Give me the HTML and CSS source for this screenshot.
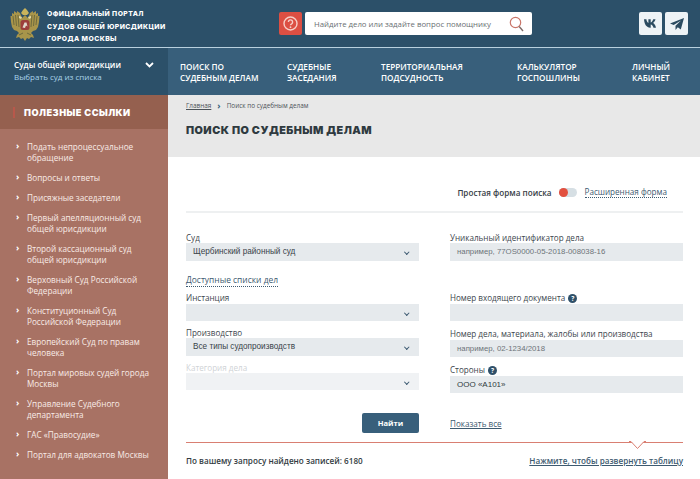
FILE: index.html
```html
<!DOCTYPE html>
<html lang="ru">
<head>
<meta charset="utf-8">
<title>Поиск по судебным делам</title>
<link rel="stylesheet" href="styles.css">
</head>
<body>
<div class="page">
  <header class="top">
    <div class="brand">
      <svg class="emblem" width="30" height="34" viewBox="0 0 30 34">
        <path fill="#a8954a" d="M15 7 12 10 10 5 7 3 7 5 4 3 4 6 2 5 2 8 .5 8 1 14 2 19 4 22 7 23 9 25 7 27 6 30 9 29 11 31 13 30 15 33 17 30 19 31 21 29 24 30 23 27 21 25 23 23 26 22 28 19 29 14 29.5 8 28 8 28 5 26 6 26 3 23 5 23 3 20 5 18 10Z"/>
        <path fill="none" stroke="#5f5f3a" stroke-width=".8" d="M3 8 4 17M5.500 7 6.500 18M8 7 9 19M27 8 26 17M24.500 7 23.500 18M22 7 21 19M9 27l4-2M21 27l-4-2"/>
        <path fill="#c9b45c" d="M11 5 13 2 15 0 17 2 19 5 17 7 13 7Z"/>
        <path fill="#e3d9a8" d="M9 8 12 9 11 11 9 10ZM21 8 18 9 19 11 21 10Z"/>
        <rect fill="#9c3f3b" x="10.500" y="12" width="9" height="10" rx="2.500"/>
        <path fill="#e0d9cc" d="M12.500 19.500 14.500 14.500 16.500 14.500 17.500 18.500 16 17.500 15 20Z"/>
      </svg>
      <div class="brand-name">ОФИЦИАЛЬНЫЙ ПОРТАЛ<br>СУДОВ ОБЩЕЙ ЮРИСДИКЦИИ<br>ГОРОДА МОСКВЫ</div>
    </div>
    <div class="assist">
      <span class="help-btn">
        <svg width="15" height="15" viewBox="0 0 15 15"><circle cx="7.5" cy="7.5" r="6.5" fill="none" stroke="#f6cfc8" stroke-width="1.4"/><path d="M5.4 6a2.1 2.1 0 1 1 3.2 1.8c-.7.4-1.1.8-1.1 1.5" fill="none" stroke="#f6cfc8" stroke-width="1.4"/><circle cx="7.5" cy="11.2" r=".9" fill="#f6cfc8"/></svg>
      </span>
      <div class="search">
        <span>Найдите дело или задайте вопрос помощнику</span>
        <svg width="15" height="16" viewBox="0 0 15 16"><circle cx="6.5" cy="6.5" r="5.2" fill="none" stroke="#c9766a" stroke-width="1.2"/><path d="M10.2 10.5 14 15" stroke="#7d6a68" stroke-width="1.4"/></svg>
      </div>
    </div>
    <div class="social">
      <span class="social-btn">
        <svg width="14" height="9" viewBox="0 0 14 9"><path fill="#2b4b60" d="M0 .3h2.4c.2 2 1.200 3.500 2 3.800V.3h2.300v3.200C7.500 3.400 8.700 2 9.200.3h2.300c-.4 1.800-1.500 3.100-2.400 3.700 1 .5 2.300 1.700 2.900 4.700H9.500C9 6.900 8 5.700 6.700 5.500v3.200h-.6C2.700 8.700.3 5.500 0 .3Z"/></svg>
      </span>
      <span class="social-btn">
        <svg width="14" height="12" viewBox="0 0 14 12"><path fill="#2b4b60" d="M14 0 0 5.400l3.700 1.500L11 2.500 5.500 7.800V12l2.300-2.800 3 2.200Z"/></svg>
      </span>
    </div>
  </header>

  <nav class="nav">
    <div class="court-pick">
      <div>
        <div class="court-title">Суды общей юрисдикции</div>
        <div class="court-sub">Выбрать суд из списка</div>
      </div>
      <svg class="court-chev" width="9" height="6" viewBox="0 0 9 6"><path d="M1 1l3.500 3.500L8 1" fill="none" stroke="#fff" stroke-width="1.800"/></svg>
    </div>
    <div class="nav-links">
      <a>ПОИСК ПО<br>СУДЕБНЫМ ДЕЛАМ</a>
      <a>СУДЕБНЫЕ<br>ЗАСЕДАНИЯ</a>
      <a>ТЕРРИТОРИАЛЬНАЯ<br>ПОДСУДНОСТЬ</a>
      <a>КАЛЬКУЛЯТОР<br>ГОСПОШЛИНЫ</a>
      <a>ЛИЧНЫЙ<br>КАБИНЕТ</a>
    </div>
  </nav>

  <div class="body">
    <aside class="side">
      <div class="side-head"><i class="side-mark"></i><span>ПОЛЕЗНЫЕ ССЫЛКИ</span></div>
      <ul class="side-list">
        <li>Подать непроцессуальное обращение</li>
        <li>Вопросы и ответы</li>
        <li>Присяжные заседатели</li>
        <li>Первый апелляционный суд общей юрисдикции</li>
        <li>Второй кассационный суд общей юрисдикции</li>
        <li>Верховный Суд Российской Федерации</li>
        <li>Конституционный Суд Российской Федерации</li>
        <li>Европейский Суд по правам человека</li>
        <li>Портал мировых судей города Москвы</li>
        <li>Управление Судебного департамента</li>
        <li>ГАС «Правосудие»</li>
        <li>Портал для адвокатов Москвы</li>
      </ul>
    </aside>

    <main class="main">
      <div class="band">
        <div class="crumbs"><a>Главная</a><b>›</b><span>Поиск по судебным делам</span></div>
        <h1>ПОИСК ПО СУДЕБНЫМ ДЕЛАМ</h1>
      </div>
      <div class="content">
        <div class="mode">
          <strong>Простая форма поиска</strong>
          <span class="toggle"><i></i></span>
          <a class="dotted">Расширенная форма</a>
        </div>
        <div class="form">
          <div class="col">
            <label>Суд</label>
            <div class="ctl select">Щербинский районный суд</div>
            <a class="dotted lists">Доступные списки дел</a>
            <label class="l-inst">Инстанция</label>
            <div class="ctl select"></div>
            <label class="l-next">Производство</label>
            <div class="ctl select">Все типы судопроизводств</div>
            <label class="l-next muted">Категория дела</label>
            <div class="ctl select faded"></div>
            <button class="go" type="button">Найти</button>
          </div>
          <div class="col">
            <label>Уникальный идентификатор дела</label>
            <div class="ctl ph">например, 77OS0000-05-2018-008038-16</div>
            <label class="l-doc">Номер входящего документа <i class="q">?</i></label>
            <div class="ctl"></div>
            <label class="l-case">Номер дела, материала, жалобы или производства</label>
            <div class="ctl ph">например, 02-1234/2018</div>
            <label class="l-case">Стороны <i class="q">?</i></label>
            <div class="ctl val">ООО «А101»</div>
            <a class="show-all">Показать все</a>
          </div>
        </div>
        <div class="rule">
          <svg class="notch" width="17" height="9" viewBox="0 0 17 9"><path d="M0 .5h2l6.500 7 6.500-7h2" fill="#fff" stroke="#d97f72"/></svg>
        </div>
        <div class="result">
          <strong>По вашему запросу найдено записей: 6180</strong>
          <a>Нажмите, чтобы развернуть таблицу</a>
        </div>
      </div>
    </main>
  </div>
</div>
</body>
</html>
```

FILE: styles.css
```css
* { box-sizing: border-box; }
html, body { margin: 0; padding: 0; }
body { font-family: "Open Sans", "Liberation Sans", sans-serif; color: #33434f; background: #fff; }
.page { width: 700px; height: 479px; overflow: hidden; display: flex; flex-direction: column; }

.top { height: 48px; flex: none; background: #2c5069; border-bottom: 1px solid #b9d0de; display: flex; align-items: flex-start; }
.brand { width: 279px; display: flex; padding: 8px 0 0 10px; gap: 7px; }
.emblem { flex: none; }
.brand-name { font-family: "Inter", "Liberation Sans", sans-serif; font-weight: 800; font-size: 6.8px; line-height: 12.5px; letter-spacing: .45px; color: #fff; white-space: nowrap; }
.assist { display: flex; gap: 3px; padding-top: 12px; }
.help-btn { width: 23px; height: 23px; background: #dc4f43; border-radius: 2px; display: flex; align-items: center; justify-content: center; }
.search { width: 227px; height: 23px; background: #fff; border-radius: 2px; display: flex; align-items: center; justify-content: space-between; padding: 0 8px 0 9px; font-size: 7.8px; color: #6a6f73; white-space: nowrap; }
.social { display: flex; gap: 3px; padding: 12px 0 0 107px; }
.social-btn { width: 23px; height: 23px; background: #eef3f6; border-radius: 2px; display: flex; align-items: center; justify-content: center; }

.nav { height: 47px; flex: none; display: flex; background: #385f7b; }
.court-pick { width: 168px; background: #2c5069; display: flex; align-items: flex-start; justify-content: space-between; padding: 11px 14px 0 14px; }
.court-title { font-size: 8.2px; font-weight: 600; line-height: 12px; color: #fff; }
.court-sub { font-size: 8px; line-height: 12px; color: #a9d3ea; }
.court-chev { margin-top: 3px; }
.nav-links { flex: 1; display: grid; grid-template-columns: 107px 94px 136px 115px auto; padding: 12.5px 0 0 12px; font-size: 8.2px; font-weight: 600; line-height: 11.5px; color: #fff; }

.body { flex: 1; display: flex; min-height: 0; }
.side { width: 168px; flex: none; background: #a87264; color: #fff; }
.side-head { height: 34px; background: #95604f; display: flex; align-items: center; padding-left: 13px; gap: 9px; }
.side-mark { width: 2px; height: 11px; background: #b8584b; }
.side-head span { font-family: "Inter", "Liberation Sans", sans-serif; font-weight: 900; font-size: 9.2px; letter-spacing: .5px; white-space: nowrap; }
.side-list { list-style: none; margin: 0; padding: 12.4px 14px 0 27px; font-size: 8.2px; line-height: 11px; color: #f8ebe6; }
.side-list li { position: relative; margin-bottom: 9px; }
.side-list li::before { content: "›"; position: absolute; left: -11px; top: -1px; font-weight: 700; font-size: 9px; color: #fff; }

.main { flex: 1; display: flex; flex-direction: column; min-width: 0; }
.band { height: 62px; flex: none; background: #e8e8e8; padding: 6px 0 0 18px; }
.crumbs { display: flex; align-items: center; gap: 6px; font-size: 6.4px; line-height: 10px; color: #4b5258; }
.crumbs a { text-decoration: underline; }
.crumbs b { font-size: 9px; line-height: 8px; color: #385f7b; }
h1 { margin: 13px 0 0; font-family: "Inter", "Liberation Sans", sans-serif; font-weight: 900; font-size: 10.8px; line-height: 14px; letter-spacing: .45px; color: #2f3a40; white-space: nowrap; }

.content { flex: 1; padding: 0 17px 0 18px; font-size: 8.1px; }
.mode { height: 56px; border-bottom: 2px solid #eef0f1; display: flex; align-items: center; justify-content: flex-end; padding: 17px 16px 0 0; }
.mode strong { font-weight: 600; color: #384047; font-size: 8.15px; }
.toggle { width: 18px; height: 9px; margin: 0 8px 0 7px; background: #d6dfe4; border-radius: 5px; display: block; }
.toggle i { display: block; width: 9px; height: 9px; background: #e2503f; border-radius: 50%; }
.dotted { color: #3d5a70; border-bottom: 1px dotted #3d5a70; line-height: 10px; }

.form { display: grid; grid-template-columns: 233px 233px; column-gap: 31px; padding-top: 18px; }
.col { display: flex; flex-direction: column; align-items: stretch; }
label { display: block; line-height: 13.5px; height: 12px; color: #3c464d; white-space: nowrap; }
.ctl { height: 17.500px; background: #e6eaed; padding-left: 7px; line-height: 17px; font-family: "Liberation Sans", sans-serif; font-size: 8.200px; color: #39434a; position: relative; }
.select::after { content: ""; position: absolute; right: 11px; top: 7px; width: 2.500px; height: 2.500px; border-right: 1.500px solid #3a5870; border-bottom: 1.500px solid #3a5870; transform: rotate(45deg); }
.faded { background: #f0f2f4; }
.muted { color: #cfd3d6; }
.ph { color: #6d7479; font-size: 7.800px; }
.val { color: #2f3a40; font-size: 8px; }
.lists { align-self: flex-start; margin-top: 14px; height: 12px; font-size: 8.450px; }
.l-inst { margin-top: 4px; height: 13px; }
.l-next { margin-top: 5px; }
.go { align-self: flex-end; margin-top: 23px; width: 57px; height: 20px; background: #385f7b; color: #fff; border: 0; border-radius: 2px; font-family: "Open Sans", sans-serif; font-weight: 700; font-size: 7.600px; padding: 0; }
.l-doc { margin-top: 30px; height: 13px; }
.l-case { margin-top: 6px; height: 12.500px; }
.q { display: inline-block; width: 9px; height: 9px; border-radius: 50%; background: #2f5069; color: #fff; font-style: normal; font-weight: 700; font-size: 6.500px; line-height: 9px; text-align: center; vertical-align: 0; margin-left: 1px; }
.show-all { align-self: flex-start; margin-top: 24px; line-height: 13px; color: #3d5a70; text-decoration: underline; }

.rule { position: relative; height: 1px; background: #d97f72; margin-top: 9px; }
.notch { position: absolute; right: 37px; top: -1px; }
.result { display: flex; justify-content: space-between; align-items: center; padding-top: 12px; line-height: 12px; }
.result strong { font-weight: 600; font-size: 8.150px; color: #333c42; }
.result a { font-weight: 600; font-size: 8.150px; color: #3d5a70; text-decoration: underline; }
```
